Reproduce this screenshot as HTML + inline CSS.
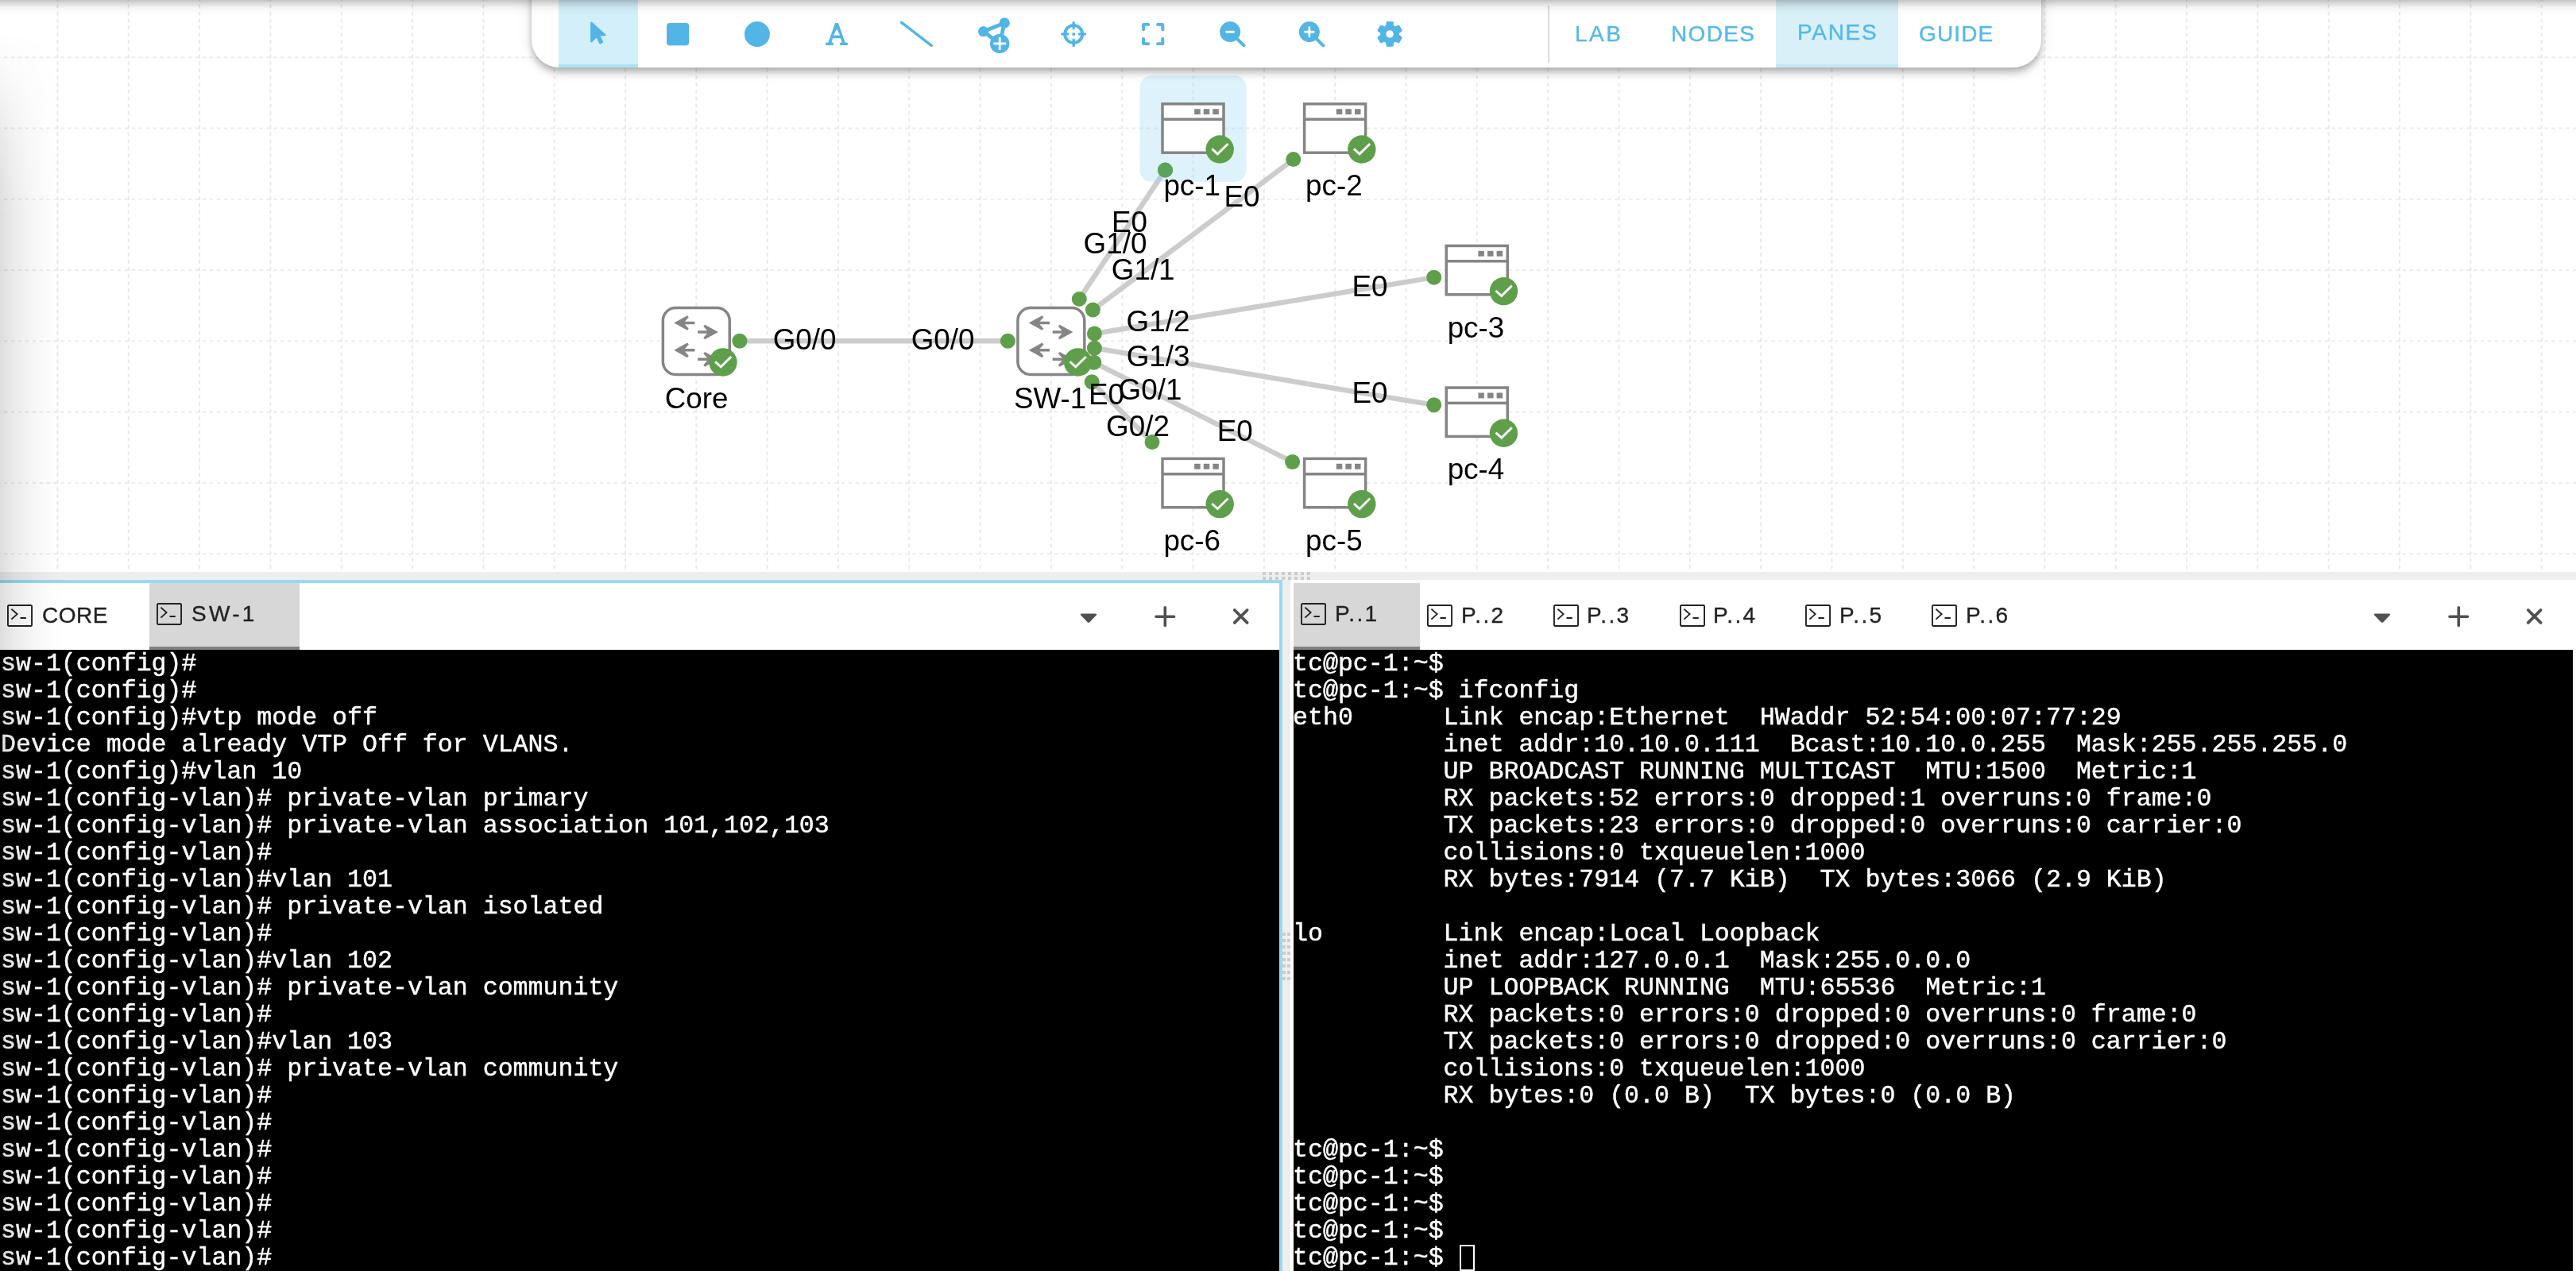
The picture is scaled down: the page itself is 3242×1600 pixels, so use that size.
<!DOCTYPE html>
<html lang="en"><head><meta charset="utf-8"><title>Lab</title>
<style>
*{box-sizing:border-box}
html,body{margin:0;padding:0}
html{overflow:hidden;width:3242px;height:1600px}
body{width:3242px;height:1600px;overflow:hidden;position:relative;background:#fff;font-family:"Liberation Sans",sans-serif}
.cv{position:absolute;left:0;top:0;display:block;will-change:transform}
.topsh{position:absolute;left:0;top:0;width:3242px;height:22px;z-index:50;background:linear-gradient(to bottom,rgba(0,0,0,.235) 0,rgba(0,0,0,.165) 3px,rgba(0,0,0,.10) 6.3px,rgba(0,0,0,.05) 9.4px,rgba(0,0,0,.024) 12.6px,rgba(0,0,0,.006) 16px,rgba(0,0,0,0) 19px)}
.leftsh{position:absolute;left:0;top:40px;width:90px;height:1560px;z-index:49;background:linear-gradient(to right,rgba(0,0,0,.135) 0,rgba(0,0,0,.08) 18px,rgba(0,0,0,.04) 40px,rgba(0,0,0,.012) 62px,rgba(0,0,0,0) 86px);-webkit-mask-image:linear-gradient(to bottom,transparent 0,rgba(0,0,0,.25) 60px,rgba(0,0,0,.7) 140px,#000 230px);mask-image:linear-gradient(to bottom,transparent 0,rgba(0,0,0,.25) 60px,rgba(0,0,0,.7) 140px,#000 230px)}
.tb{position:absolute;left:669px;top:-20px;width:1900px;height:105px;background:#fff;border-radius:0 0 35px 35px;box-shadow:0 4px 8px -2px rgba(0,0,0,.2),0 8px 10px 0 rgba(0,0,0,.14),0 2px 20px 0 rgba(0,0,0,.12);z-index:10}
.tbsel{position:absolute;left:34px;top:20px;width:100px;height:85px;background:#d3f0fa;border-bottom:4px solid #abe2f5}
.tbi{position:absolute;left:31px;top:20px}
.tbsep{position:absolute;left:1279px;top:27px;width:2px;height:72px;background:#dcdcdc}
.tbt{will-change:transform;position:absolute;top:20px;height:85px;color:#56b9e8;-webkit-text-stroke:0.4px #56b9e8;font-size:28px;line-height:85px;white-space:nowrap;letter-spacing:2.5px}
.tbt.sel{background:#d9f0f8;border-bottom:4px solid #c3e8f4;line-height:81px}
.hsplit{position:absolute;left:0;top:720px;width:3242px;height:10px;background:#eeeeee}
.hgrip{position:absolute;left:1589px;top:720px;width:60px;height:10px;background-image:linear-gradient(to right,#ccc 4px,transparent 4px),linear-gradient(to right,#ccc 4px,transparent 4px);background-size:8px 4px,8px 4px;background-repeat:repeat-x,repeat-x;background-position:0 0,0 6px}
.vgrip{position:absolute;left:1614px;top:1174px;width:10px;height:60px;background-image:linear-gradient(to bottom,#ccc 4px,transparent 4px),linear-gradient(to bottom,#ccc 4px,transparent 4px);background-size:4px 8px,4px 8px;background-repeat:repeat-y,repeat-y;background-position:0 0,6px 0}
.vsplit{position:absolute;left:1614px;top:730px;width:10px;height:870px;background:#eeeeee}
.pane{position:absolute;top:730px;height:870px;border:4px solid #fff;border-bottom:0;background:#fff;overflow:hidden}
.pane.l{left:-4px;width:1618px;border-color:#97daf0}
.pane.r{left:1624px;width:1618px}
.tabs{position:absolute;left:0;top:0;right:0;height:84px;background:#fff}
.tab{position:absolute;top:0;height:84px;color:#222;-webkit-text-stroke:0.35px #222;font-size:28px;letter-spacing:2.5px;white-space:nowrap}
.tab.sel{background:#d7d7d7;border-bottom:4px solid #808080}
.tab .ti{position:absolute;top:27px}
.tab.sel .ti{top:24.5px}
.tab span{position:absolute;top:25.3px;line-height:32px;will-change:transform}
.tab.sel span{top:23.3px}
.pc{position:absolute;top:0}
.term{position:absolute;left:0;top:84px;right:0;bottom:0;background:#000;color:#fff;font-family:"Liberation Mono",monospace;font-size:31.6px;line-height:34px;white-space:pre;overflow:hidden}
.tx{will-change:transform;-webkit-text-stroke:0.45px #fff}
.ln{height:34px;position:relative;top:1px}
.cur{position:absolute;border:2px solid #fff;width:19px;height:33px}
</style></head><body>
<svg class="cv" width="3242" height="720" viewBox="0 0 3242 720">
<defs><pattern id="grid" x="27.79" y="27.53" width="89.32" height="89.32" patternUnits="userSpaceOnUse"><path d="M0 44.66H89.32" stroke="#d8d8d8" stroke-width="1.15" stroke-dasharray="4.47 4.47" stroke-dashoffset="-3.77"/><path d="M44.66 0V89.32" stroke="#d8d8d8" stroke-width="1.15" stroke-dasharray="4.47 4.47" stroke-dashoffset="-5.07"/></pattern></defs>
<rect width="3242" height="720" fill="#fff"/>
<rect width="3242" height="720" fill="url(#grid)"/>
<line x1="930.9" y1="429.2" x2="1268.4" y2="429.2" stroke="#cccccc" stroke-width="6.4"/>
<line x1="1358.3" y1="376.4" x2="1466.5" y2="214.1" stroke="#cccccc" stroke-width="6.4"/>
<line x1="1375.4" y1="390.1" x2="1627.8" y2="200.6" stroke="#cccccc" stroke-width="6.4"/>
<line x1="1377.4" y1="420" x2="1804.7" y2="349.2" stroke="#cccccc" stroke-width="6.4"/>
<line x1="1377.4" y1="438.2" x2="1804.7" y2="509.8" stroke="#cccccc" stroke-width="6.4"/>
<line x1="1376.8" y1="456.3" x2="1626.6" y2="581.5" stroke="#cccccc" stroke-width="6.4"/>
<line x1="1374.2" y1="480.8" x2="1450" y2="556.6" stroke="#cccccc" stroke-width="6.4"/>
<circle cx="930.9" cy="429.2" r="9.5" fill="#5f9f4b"/>
<circle cx="1268.4" cy="429.2" r="9.5" fill="#5f9f4b"/>
<circle cx="1358.3" cy="376.4" r="9.5" fill="#5f9f4b"/>
<circle cx="1466.5" cy="214.1" r="9.5" fill="#5f9f4b"/>
<circle cx="1375.4" cy="390.1" r="9.5" fill="#5f9f4b"/>
<circle cx="1627.8" cy="200.6" r="9.5" fill="#5f9f4b"/>
<circle cx="1377.4" cy="420" r="9.5" fill="#5f9f4b"/>
<circle cx="1804.7" cy="349.2" r="9.5" fill="#5f9f4b"/>
<circle cx="1377.4" cy="438.2" r="9.5" fill="#5f9f4b"/>
<circle cx="1804.7" cy="509.8" r="9.5" fill="#5f9f4b"/>
<circle cx="1376.8" cy="456.3" r="9.5" fill="#5f9f4b"/>
<circle cx="1626.6" cy="581.5" r="9.5" fill="#5f9f4b"/>
<circle cx="1374.2" cy="480.8" r="9.5" fill="#5f9f4b"/>
<circle cx="1450" cy="556.6" r="9.5" fill="#5f9f4b"/>
<rect x="1434.5" y="95" width="134" height="134" rx="15" ry="15" fill="#8fd3ee" fill-opacity="0.3"/>
<circle cx="1466.5" cy="214.1" r="9.5" fill="#5ca25a"/>
<rect x="834.34" y="387.5" width="83.9" height="83.9" rx="16" ry="16" fill="#fff" stroke="#858585" stroke-width="3.5"/><path d="M848.19 406.45 L864.99 397.15 L866.79 399.25 L861.99 404.7 L874.39 404.7 L874.39 408.2 L861.99 408.2 L866.79 413.65 L864.99 415.75Z" fill="#858585"/><path d="M903.89 417.95 L887.09 408.65 L885.29 410.75 L890.09 416.2 L878.09 416.2 L878.09 419.7 L890.09 419.7 L885.29 425.15 L887.09 427.25Z" fill="#858585"/><path d="M848.19 440.85 L864.99 431.55 L866.79 433.65 L861.99 439.1 L874.39 439.1 L874.39 442.6 L861.99 442.6 L866.79 448.05 L864.99 450.15Z" fill="#858585"/><path d="M903.89 452.35 L887.09 443.05 L885.29 445.15 L890.09 450.6 L878.09 450.6 L878.09 454.1 L890.09 454.1 L885.29 459.55 L887.09 461.65Z" fill="#858585"/>
<rect x="1280.92" y="387.5" width="83.9" height="83.9" rx="16" ry="16" fill="#fff" stroke="#858585" stroke-width="3.5"/><path d="M1294.77 406.45 L1311.57 397.15 L1313.37 399.25 L1308.57 404.7 L1320.97 404.7 L1320.97 408.2 L1308.57 408.2 L1313.37 413.65 L1311.57 415.75Z" fill="#858585"/><path d="M1350.47 417.95 L1333.67 408.65 L1331.87 410.75 L1336.67 416.2 L1324.67 416.2 L1324.67 419.7 L1336.67 419.7 L1331.87 425.15 L1333.67 427.25Z" fill="#858585"/><path d="M1294.77 440.85 L1311.57 431.55 L1313.37 433.65 L1308.57 439.1 L1320.97 439.1 L1320.97 442.6 L1308.57 442.6 L1313.37 448.05 L1311.57 450.15Z" fill="#858585"/><path d="M1350.47 452.35 L1333.67 443.05 L1331.87 445.15 L1336.67 450.6 L1324.67 450.6 L1324.67 454.1 L1336.67 454.1 L1331.87 459.55 L1333.67 461.65Z" fill="#858585"/>
<rect x="1463" y="130.8" width="77" height="61.4" fill="#fff" stroke="#858585" stroke-width="3.5"/><rect x="1462.25" y="148.4" width="78.5" height="3.5" fill="#858585"/><rect x="1503.15" y="137.2" width="7.5" height="6.9" fill="#858585"/><rect x="1514.75" y="137.2" width="7.5" height="6.9" fill="#858585"/><rect x="1526.35" y="137.2" width="7.5" height="6.9" fill="#858585"/>
<rect x="1641.63" y="130.8" width="77" height="61.4" fill="#fff" stroke="#858585" stroke-width="3.5"/><rect x="1640.88" y="148.4" width="78.5" height="3.5" fill="#858585"/><rect x="1681.78" y="137.2" width="7.5" height="6.9" fill="#858585"/><rect x="1693.38" y="137.2" width="7.5" height="6.9" fill="#858585"/><rect x="1704.98" y="137.2" width="7.5" height="6.9" fill="#858585"/>
<rect x="1820.26" y="309.43" width="77" height="61.4" fill="#fff" stroke="#858585" stroke-width="3.5"/><rect x="1819.51" y="327.03" width="78.5" height="3.5" fill="#858585"/><rect x="1860.41" y="315.83" width="7.5" height="6.9" fill="#858585"/><rect x="1872.01" y="315.83" width="7.5" height="6.9" fill="#858585"/><rect x="1883.61" y="315.83" width="7.5" height="6.9" fill="#858585"/>
<rect x="1820.26" y="488.06" width="77" height="61.4" fill="#fff" stroke="#858585" stroke-width="3.5"/><rect x="1819.51" y="505.66" width="78.5" height="3.5" fill="#858585"/><rect x="1860.41" y="494.46" width="7.5" height="6.9" fill="#858585"/><rect x="1872.01" y="494.46" width="7.5" height="6.9" fill="#858585"/><rect x="1883.61" y="494.46" width="7.5" height="6.9" fill="#858585"/>
<rect x="1641.63" y="577.38" width="77" height="61.4" fill="#fff" stroke="#858585" stroke-width="3.5"/><rect x="1640.88" y="594.98" width="78.5" height="3.5" fill="#858585"/><rect x="1681.78" y="583.78" width="7.5" height="6.9" fill="#858585"/><rect x="1693.38" y="583.78" width="7.5" height="6.9" fill="#858585"/><rect x="1704.98" y="583.78" width="7.5" height="6.9" fill="#858585"/>
<rect x="1463" y="577.38" width="77" height="61.4" fill="#fff" stroke="#858585" stroke-width="3.5"/><rect x="1462.25" y="594.98" width="78.5" height="3.5" fill="#858585"/><rect x="1503.15" y="583.78" width="7.5" height="6.9" fill="#858585"/><rect x="1514.75" y="583.78" width="7.5" height="6.9" fill="#858585"/><rect x="1526.35" y="583.78" width="7.5" height="6.9" fill="#858585"/>
<circle cx="909.99" cy="455.95" r="17.7" fill="#5f9f4b"/><path d="M900.09 455.35 L907.19 461.85 L920.29 448.95" fill="none" stroke="#fff" stroke-width="2.9"/>
<circle cx="1356.57" cy="455.95" r="17.7" fill="#5f9f4b"/><path d="M1346.67 455.35 L1353.77 461.85 L1366.87 448.95" fill="none" stroke="#fff" stroke-width="2.9"/>
<circle cx="1535.2" cy="188" r="17.7" fill="#5f9f4b"/><path d="M1525.3 187.4 L1532.4 193.9 L1545.5 181" fill="none" stroke="#fff" stroke-width="2.9"/>
<circle cx="1713.83" cy="188" r="17.7" fill="#5f9f4b"/><path d="M1703.93 187.4 L1711.03 193.9 L1724.13 181" fill="none" stroke="#fff" stroke-width="2.9"/>
<circle cx="1892.46" cy="366.63" r="17.7" fill="#5f9f4b"/><path d="M1882.56 366.03 L1889.66 372.53 L1902.76 359.63" fill="none" stroke="#fff" stroke-width="2.9"/>
<circle cx="1892.46" cy="545.26" r="17.7" fill="#5f9f4b"/><path d="M1882.56 544.66 L1889.66 551.16 L1902.76 538.26" fill="none" stroke="#fff" stroke-width="2.9"/>
<circle cx="1713.83" cy="634.58" r="17.7" fill="#5f9f4b"/><path d="M1703.93 633.98 L1711.03 640.48 L1724.13 627.58" fill="none" stroke="#fff" stroke-width="2.9"/>
<circle cx="1535.2" cy="634.58" r="17.7" fill="#5f9f4b"/><path d="M1525.3 633.98 L1532.4 640.48 L1545.5 627.58" fill="none" stroke="#fff" stroke-width="2.9"/>
<g font-family="Liberation Sans, sans-serif" font-size="36.8" fill="#000" text-anchor="middle">
<text x="876.59" y="514.05">Core</text>
<text x="1321.57" y="514.05">SW-1</text>
<text x="1500.2" y="246.1">pc-1</text>
<text x="1678.83" y="246.1">pc-2</text>
<text x="1857.46" y="424.73">pc-3</text>
<text x="1857.46" y="603.36">pc-4</text>
<text x="1678.83" y="692.68">pc-5</text>
<text x="1500.2" y="692.68">pc-6</text>
<text x="1012.65" y="439.9">G0/0</text>
<text x="1186.65" y="439.9">G0/0</text>
<text x="1421.4" y="291.9">E0</text>
<text x="1403.5" y="318.8">G1/0</text>
<text x="1438.7" y="351.6">G1/1</text>
<text x="1562.9" y="260.4">E0</text>
<text x="1457.5" y="417.4">G1/2</text>
<text x="1724" y="372.9">E0</text>
<text x="1457.6" y="461.4">G1/3</text>
<text x="1724" y="506.5">E0</text>
<text x="1447.5" y="503">G0/1</text>
<text x="1554.2" y="555.4">E0</text>
<text x="1432" y="548.9">G0/2</text>
<text x="1392.4" y="509">E0</text>
</g>
</svg>
<div class="tb"><div class="tbsel"></div>
<svg class="tbi" width="1200" height="85" viewBox="700 0 1200 85" fill="#52b5e5">
<path d="M744.3 28.6 L761.4 44.1 L753.9 44.1 L757.9 53 L755.3 54.3 L751.1 45.6 L744.3 52.2 Z" stroke="#52b5e5" stroke-width="2.4" stroke-linejoin="round"/>
<rect x="839" y="29" width="28.2" height="28.2" rx="4" ry="4"/>
<circle cx="952.9" cy="43" r="16"/>
<path d="M1051 28.9 L1055 28.9 L1063.6 53.4 L1065.6 53.4 Q1067.2 53.4 1067.2 55.2 Q1067.2 57 1065.6 57 L1058.4 57 Q1056.8 57 1056.8 55.2 Q1056.8 53.4 1058.4 53.4 L1059.6 53.4 L1057.9 48.2 L1048.1 48.2 L1046.4 53.4 L1047.6 53.4 Q1049.2 53.4 1049.2 55.2 Q1049.2 57 1047.6 57 L1040.4 57 Q1038.8 57 1038.8 55.2 Q1038.8 53.4 1040.4 53.4 L1042.4 53.4 Z M1049 44.4 L1057.2 44.4 L1053.1 36.6 Z" fill-rule="evenodd"/>
<line x1="1134.6" y1="28.3" x2="1172.2" y2="57.3" stroke="#52b5e5" stroke-width="3.4" stroke-linecap="round"/>
<path d="M1237.6 39.6 L1264.2 28.9 L1258.2 54.9 Z" fill="none" stroke="#52b5e5" stroke-width="4.8" stroke-linejoin="round"/>
<circle cx="1264.2" cy="28.9" r="6.6"/><circle cx="1237.6" cy="39.6" r="6.6"/><circle cx="1258.2" cy="54.9" r="12.2"/>
<path d="M1250.2 54.9 H1266.2 M1258.2 46.9 V62.9" stroke="#fff" stroke-width="2.8" fill="none"/>
<circle cx="1351.2" cy="42.9" r="11" fill="none" stroke="#52b5e5" stroke-width="3.9"/>
<path d="M1351.2 28.4 V35.6 M1351.2 50.2 V57.4 M1336.7 42.9 H1343.9 M1358.5 42.9 H1365.7" stroke="#52b5e5" stroke-width="3.4" stroke-linecap="round" fill="none"/>
<circle cx="1351.2" cy="42.9" r="2"/>
<path d="M1439 37.2 V30.9 H1445.3 M1457 30.9 H1463.3 V37.2 M1463.3 48.8 V55.1 H1457 M1445.3 55.1 H1439 V48.8" stroke="#52b5e5" stroke-width="3.9" stroke-linecap="round" stroke-linejoin="round" fill="none"/>
<circle cx="1548.1" cy="40.1" r="13"/><line x1="1556" y1="48" x2="1565.6" y2="57.4" stroke="#52b5e5" stroke-width="4" stroke-linecap="round"/>
<path d="M1543.5 40.1 H1552.7" stroke="#fff" stroke-width="2.9" stroke-linecap="round" fill="none"/>
<circle cx="1647.9" cy="40.1" r="13"/><line x1="1655.8" y1="48" x2="1665.4" y2="57.4" stroke="#52b5e5" stroke-width="4" stroke-linecap="round"/>
<path d="M1642.5 40.1 H1653.3 M1647.9 34.7 V45.5" stroke="#fff" stroke-width="2.9" stroke-linecap="round" fill="none"/>
<path d="M1745.73 33.06 L1746.06 28.62 L1752.14 28.62 L1752.47 33.06 L1755.94 35.06 L1759.94 33.12 L1762.99 38.4 L1759.31 40.9 L1759.31 44.9 L1762.99 47.4 L1759.94 52.68 L1755.94 50.74 L1752.47 52.74 L1752.14 57.18 L1746.06 57.18 L1745.73 52.74 L1742.26 50.74 L1738.26 52.68 L1735.21 47.4 L1738.89 44.9 L1738.89 40.9 L1735.21 38.4 L1738.26 33.12 L1742.26 35.06Z" stroke="#52b5e5" stroke-width="3.2" stroke-linejoin="round"/>
<circle cx="1749.1" cy="42.9" r="4.7" fill="#fff"/>
</svg>
<div class="tbsep"></div>
<div class="tbt" style="left:1313px">LAB</div>
<div class="tbt" style="left:1434px;letter-spacing:1.35px">NODES</div>
<div class="tbt sel" style="left:1566px;width:154px;padding-left:27px;letter-spacing:1.7px">PANES</div>
<div class="tbt" style="left:1746px;letter-spacing:1.15px">GUIDE</div>
</div>
<div class="hsplit"></div><div class="hgrip"></div><div class="vsplit"></div><div class="vgrip"></div>
<div class="pane l"><div class="tabs">
<div class="tab" style="left:0;width:188px"><svg class="ti" style="left:9px" width="32" height="28" viewBox="0 0 32 28" fill="none" stroke="#222" stroke-width="1.9"><rect x="0.95" y="0.95" width="30.1" height="26.1" rx="1.2"/><path d="M5.4 5.6 L12.6 12.1 L5.4 18.6 M16.5 17 H23.8"/></svg><span style="left:53px;letter-spacing:0.5px">CORE</span></div>
<div class="tab sel" style="left:188px;width:189px"><svg class="ti" style="left:9px" width="32" height="28" viewBox="0 0 32 28" fill="none" stroke="#222" stroke-width="1.9"><rect x="0.95" y="0.95" width="30.1" height="26.1" rx="1.2"/><path d="M5.4 5.6 L12.6 12.1 L5.4 18.6 M16.5 17 H23.8"/></svg><span style="left:53px;letter-spacing:3.3px">SW-1</span></div>
<svg class="pc" style="left:1352px" width="260" height="84" viewBox="0 0 260 84"><path d="M9.6 38.4 H26.4 Q29.6 38.4 27.4 40.8 L19.4 49.2 Q18 50.4 16.6 49.2 L8.6 40.8 Q6.4 38.4 9.6 38.4Z" fill="#505050"/><path d="M103 42.2 H125.6 M114.3 30.9 V53.5" stroke="#505050" stroke-width="3.6" stroke-linecap="round" fill="none"/><path d="M201.8 34 L217.6 49.8 M217.6 34 L201.8 49.8" stroke="#505050" stroke-width="3.8" stroke-linecap="round" fill="none"/></svg>
</div><div class="term" style="padding-left:1px"><div class="tx"><div class="ln">sw-1(config)#</div><div class="ln">sw-1(config)#</div><div class="ln">sw-1(config)#vtp mode off</div><div class="ln">Device mode already VTP Off for VLANS.</div><div class="ln">sw-1(config)#vlan 10</div><div class="ln">sw-1(config-vlan)# private-vlan primary</div><div class="ln">sw-1(config-vlan)# private-vlan association 101,102,103</div><div class="ln">sw-1(config-vlan)#</div><div class="ln">sw-1(config-vlan)#vlan 101</div><div class="ln">sw-1(config-vlan)# private-vlan isolated</div><div class="ln">sw-1(config-vlan)#</div><div class="ln">sw-1(config-vlan)#vlan 102</div><div class="ln">sw-1(config-vlan)# private-vlan community</div><div class="ln">sw-1(config-vlan)#</div><div class="ln">sw-1(config-vlan)#vlan 103</div><div class="ln">sw-1(config-vlan)# private-vlan community</div><div class="ln">sw-1(config-vlan)#</div><div class="ln">sw-1(config-vlan)#</div><div class="ln">sw-1(config-vlan)#</div><div class="ln">sw-1(config-vlan)#</div><div class="ln">sw-1(config-vlan)#</div><div class="ln">sw-1(config-vlan)#</div><div class="ln">sw-1(config-vlan)#</div></div></div></div>
<div class="pane r"><div class="tabs">
<div class="tab sel" style="left:0px;width:158.8px"><svg class="ti" style="left:9.3px" width="32" height="28" viewBox="0 0 32 28" fill="none" stroke="#222" stroke-width="1.9"><rect x="0.95" y="0.95" width="30.1" height="26.1" rx="1.2"/><path d="M5.4 5.6 L12.6 12.1 L5.4 18.6 M16.5 17 H23.8"/></svg><span style="left:51.8px;letter-spacing:2.3px">P..1</span></div>
<div class="tab" style="left:158.8px;width:158.8px"><svg class="ti" style="left:9.3px" width="32" height="28" viewBox="0 0 32 28" fill="none" stroke="#222" stroke-width="1.9"><rect x="0.95" y="0.95" width="30.1" height="26.1" rx="1.2"/><path d="M5.4 5.6 L12.6 12.1 L5.4 18.6 M16.5 17 H23.8"/></svg><span style="left:51.8px;letter-spacing:2.3px">P..2</span></div>
<div class="tab" style="left:317.6px;width:158.8px"><svg class="ti" style="left:9.3px" width="32" height="28" viewBox="0 0 32 28" fill="none" stroke="#222" stroke-width="1.9"><rect x="0.95" y="0.95" width="30.1" height="26.1" rx="1.2"/><path d="M5.4 5.6 L12.6 12.1 L5.4 18.6 M16.5 17 H23.8"/></svg><span style="left:51.8px;letter-spacing:2.3px">P..3</span></div>
<div class="tab" style="left:476.4px;width:158.8px"><svg class="ti" style="left:9.3px" width="32" height="28" viewBox="0 0 32 28" fill="none" stroke="#222" stroke-width="1.9"><rect x="0.95" y="0.95" width="30.1" height="26.1" rx="1.2"/><path d="M5.4 5.6 L12.6 12.1 L5.4 18.6 M16.5 17 H23.8"/></svg><span style="left:51.8px;letter-spacing:2.3px">P..4</span></div>
<div class="tab" style="left:635.2px;width:158.8px"><svg class="ti" style="left:9.3px" width="32" height="28" viewBox="0 0 32 28" fill="none" stroke="#222" stroke-width="1.9"><rect x="0.95" y="0.95" width="30.1" height="26.1" rx="1.2"/><path d="M5.4 5.6 L12.6 12.1 L5.4 18.6 M16.5 17 H23.8"/></svg><span style="left:51.8px;letter-spacing:2.3px">P..5</span></div>
<div class="tab" style="left:794px;width:158.8px"><svg class="ti" style="left:9.3px" width="32" height="28" viewBox="0 0 32 28" fill="none" stroke="#222" stroke-width="1.9"><rect x="0.95" y="0.95" width="30.1" height="26.1" rx="1.2"/><path d="M5.4 5.6 L12.6 12.1 L5.4 18.6 M16.5 17 H23.8"/></svg><span style="left:51.8px;letter-spacing:2.3px">P..6</span></div>
<svg class="pc" style="left:1352px" width="260" height="84" viewBox="0 0 260 84"><path d="M9.6 38.4 H26.4 Q29.6 38.4 27.4 40.8 L19.4 49.2 Q18 50.4 16.6 49.2 L8.6 40.8 Q6.4 38.4 9.6 38.4Z" fill="#505050"/><path d="M103 42.2 H125.6 M114.3 30.9 V53.5" stroke="#505050" stroke-width="3.6" stroke-linecap="round" fill="none"/><path d="M201.8 34 L217.6 49.8 M217.6 34 L201.8 49.8" stroke="#505050" stroke-width="3.8" stroke-linecap="round" fill="none"/></svg>
</div><div class="term" style="padding-left:0;text-indent:-1px"><div class="tx"><div class="ln">tc@pc-1:~$</div><div class="ln">tc@pc-1:~$ ifconfig</div><div class="ln">eth0      Link encap:Ethernet  HWaddr 52:54:00:07:77:29</div><div class="ln">          inet addr:10.10.0.111  Bcast:10.10.0.255  Mask:255.255.255.0</div><div class="ln">          UP BROADCAST RUNNING MULTICAST  MTU:1500  Metric:1</div><div class="ln">          RX packets:52 errors:0 dropped:1 overruns:0 frame:0</div><div class="ln">          TX packets:23 errors:0 dropped:0 overruns:0 carrier:0</div><div class="ln">          collisions:0 txqueuelen:1000</div><div class="ln">          RX bytes:7914 (7.7 KiB)  TX bytes:3066 (2.9 KiB)</div><div class="ln">&nbsp;</div><div class="ln">lo        Link encap:Local Loopback</div><div class="ln">          inet addr:127.0.0.1  Mask:255.0.0.0</div><div class="ln">          UP LOOPBACK RUNNING  MTU:65536  Metric:1</div><div class="ln">          RX packets:0 errors:0 dropped:0 overruns:0 frame:0</div><div class="ln">          TX packets:0 errors:0 dropped:0 overruns:0 carrier:0</div><div class="ln">          collisions:0 txqueuelen:1000</div><div class="ln">          RX bytes:0 (0.0 B)  TX bytes:0 (0.0 B)</div><div class="ln">&nbsp;</div><div class="ln">tc@pc-1:~$</div><div class="ln">tc@pc-1:~$</div><div class="ln">tc@pc-1:~$</div><div class="ln">tc@pc-1:~$</div><div class="ln">tc@pc-1:~$ </div></div><div class="cur" style="left:209px;top:749px"></div></div></div>
<div class="leftsh"></div><div class="topsh"></div>
</body></html>
